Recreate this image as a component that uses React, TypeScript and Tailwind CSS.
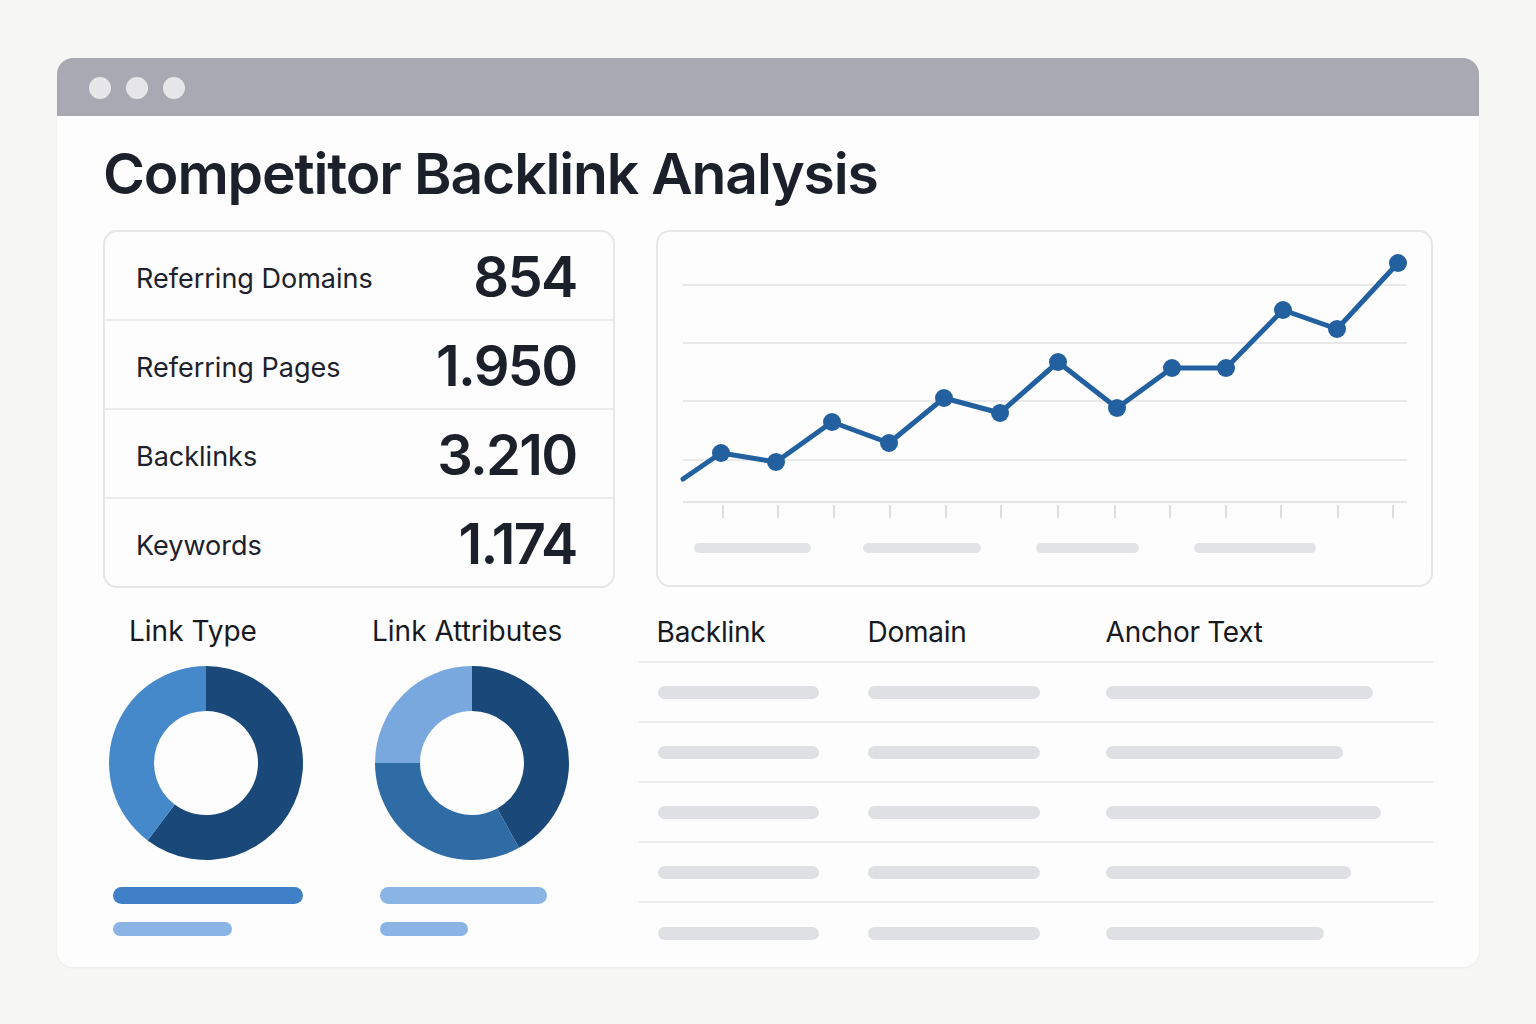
import React from 'react';

const FONT = { fontFamily: 'Inter, "Noto Sans", "Liberation Sans", sans-serif' };

const stats = [
  { label: 'Referring Domains', value: '854' },
  { label: 'Referring Pages', value: '1.950' },
  { label: 'Backlinks', value: '3.210' },
  { label: 'Keywords', value: '1.174' },
];

// chart points in page coordinates
const points: [number, number][] = [
  [721, 453], [776, 462], [832, 422], [889, 443], [944, 398], [1000, 413],
  [1058, 362], [1117, 408], [1172, 368], [1226, 368], [1283, 310], [1337, 329], [1398, 263],
];
const ticks = [723, 778, 834, 890, 946, 1001, 1058, 1115, 1170, 1226, 1281, 1338, 1393];
const gridY = [285, 343, 401, 460];
const labelBars = [[694, 811], [863, 981], [1036, 1139], [1194, 1316]];

function arc(cx: number, cy: number, ro: number, ri: number, a0: number, a1: number) {
  const p = (r: number, a: number) => {
    const t = (a * Math.PI) / 180;
    return [cx + r * Math.sin(t), cy - r * Math.cos(t)];
  };
  const large = a1 - a0 > 180 ? 1 : 0;
  const [x0, y0] = p(ro, a0);
  const [x1, y1] = p(ro, a1);
  const [x2, y2] = p(ri, a1);
  const [x3, y3] = p(ri, a0);
  return `M${x0} ${y0} A${ro} ${ro} 0 ${large} 1 ${x1} ${y1} L${x2} ${y2} A${ri} ${ri} 0 ${large} 0 ${x3} ${y3} Z`;
}

function Donut({ segments }: { segments: { from: number; to: number; color: string }[] }) {
  return (
    <svg width="196" height="196" viewBox="0 0 196 196">
      {segments.map((s, i) => (
        <path key={i} d={arc(98, 98, 97, 52, s.from, s.to)} fill={s.color} />
      ))}
    </svg>
  );
}

const rows = [267, 237, 275, 245, 218];

export default function App() {
  const linePath = 'M683 479 ' + points.map(([x, y]) => `L${x} ${y}`).join(' ');

  return (
    <div className="w-[1536px] h-[1024px] bg-[#f7f7f6] pt-[58px] px-[57px]" style={FONT}>
      <div className="w-[1422px] h-[909px] rounded-[16px] bg-[#fdfdfd] shadow-[0_1px_3px_rgba(0,0,0,0.05)] overflow-hidden">
        {/* title bar */}
        <div className="h-[58px] bg-[#a8a9b2] flex items-center gap-[15px] pl-[32px] pt-[2px]">
          <span className="w-[22px] h-[22px] rounded-full bg-[#e6e6e9]" />
          <span className="w-[22px] h-[22px] rounded-full bg-[#e6e6e9]" />
          <span className="w-[22px] h-[22px] rounded-full bg-[#e6e6e9]" />
        </div>

        <div className="px-[46px]">
          <h1 className="mt-[28px] text-[57px] leading-[60px] font-semibold text-[#1b202a] tracking-[-0.02em]">
            Competitor Backlink Analysis
          </h1>

          {/* top row */}
          <div className="mt-[26px] flex gap-[41px]">
            <div className="w-[512px] h-[358px] border-2 border-[#e6e7e9] rounded-[14px] flex flex-col">
              {stats.map((s, i) => (
                <div
                  key={s.label}
                  className={`flex-1 flex items-center justify-between pl-[31px] pr-[36px] pt-[3px] ${i < 3 ? 'border-b-2 border-[#ebecee]' : ''}`}
                >
                  <span className="pt-[5px] text-[27px] text-[#1c212b]">{s.label}</span>
                  <span className="text-[56px] font-semibold text-[#1b202a] tracking-[-0.03em]">{s.value}</span>
                </div>
              ))}
            </div>

            <div className="w-[778px] h-[357px] border-2 border-[#e6e7e9] rounded-[14px] overflow-hidden">
              <svg width="774" height="353" viewBox="658 232 774 353">
                {gridY.map(y => (
                  <line key={y} x1="683" x2="1407" y1={y} y2={y} stroke="#e9e9eb" strokeWidth="2" />
                ))}
                <line x1="683" x2="1407" y1="502" y2="502" stroke="#e6e6e8" strokeWidth="2" />
                {ticks.map(x => (
                  <line key={x} x1={x} x2={x} y1="505" y2="518" stroke="#dcdde0" strokeWidth="2" />
                ))}
                {labelBars.map(([a, b]) => (
                  <rect key={a} x={a} y="543" width={b - a} height="10" rx="5" fill="#e2e3e6" />
                ))}
                <path d={linePath} fill="none" stroke="#23609f" strokeWidth="5" strokeLinejoin="round" strokeLinecap="round" />
                {points.map(([x, y]) => (
                  <circle key={x} cx={x} cy={y} r="9" fill="#23609f" />
                ))}
              </svg>
            </div>
          </div>

          {/* bottom row */}
          <div className="mt-[23px] flex">
            <div className="w-[536px] flex pl-[6px] gap-[71px]">
              <div className="w-[194px] flex flex-col">
                <div className="ml-[20px] text-[28px] leading-[40px] text-[#16191f]">Link Type</div>
                <div className="mt-[14px] -ml-[1px]">
                  <Donut
                    segments={[
                      { from: 0, to: 217, color: '#1a4878' },
                      { from: 217, to: 360, color: '#4689cb' },
                    ]}
                  />
                </div>
                <div className="mt-[26px] ml-[4px] w-[190px] h-[17px] rounded-full bg-[#3f80c6]" />
                <div className="mt-[18px] ml-[4px] w-[119px] h-[14px] rounded-full bg-[#8ab4e3]" />
              </div>
              <div className="w-[200px] flex flex-col">
                <div className="-ml-[2px] text-[28px] leading-[40px] text-[#16191f] whitespace-nowrap">Link Attributes</div>
                <div className="mt-[14px]">
                  <Donut
                    segments={[
                      { from: 0, to: 151, color: '#1a4878' },
                      { from: 151, to: 270, color: '#2f6ba4' },
                      { from: 270, to: 360, color: '#78a8de' },
                    ]}
                  />
                </div>
                <div className="mt-[26px] ml-[6px] w-[167px] h-[17px] rounded-full bg-[#8ab4e3]" />
                <div className="mt-[18px] ml-[6px] w-[88px] h-[14px] rounded-full bg-[#8ab4e3]" />
              </div>
            </div>

            <div className="w-[795px]">
              <div className="grid grid-cols-[211px_238px_1fr] pl-[18px] h-[52px] items-start pt-[1px] border-b-2 border-[#ebebed]">
                <span className="text-[28px] leading-[40px] text-[#16191f] tracking-[-0.01em]">Backlink</span>
                <span className="text-[28px] leading-[40px] text-[#16191f] tracking-[-0.01em]">Domain</span>
                <span className="text-[28px] leading-[40px] text-[#16191f] tracking-[-0.01em]">Anchor Text</span>
              </div>
              {rows.map((w, i) => (
                <div
                  key={i}
                  className={`grid grid-cols-[210px_238px_1fr] pl-[19px] h-[60px] items-center ${i < 4 ? 'border-b-2 border-[#ebebed]' : ''}`}
                >
                  <div className="w-[161px] h-[13px] rounded-full bg-[#dfe0e3]" />
                  <div className="w-[172px] h-[13px] rounded-full bg-[#dfe0e3]" />
                  <div className="h-[13px] rounded-full bg-[#dfe0e3]" style={{ width: w }} />
                </div>
              ))}
            </div>
          </div>
        </div>
      </div>
    </div>
  );
}
